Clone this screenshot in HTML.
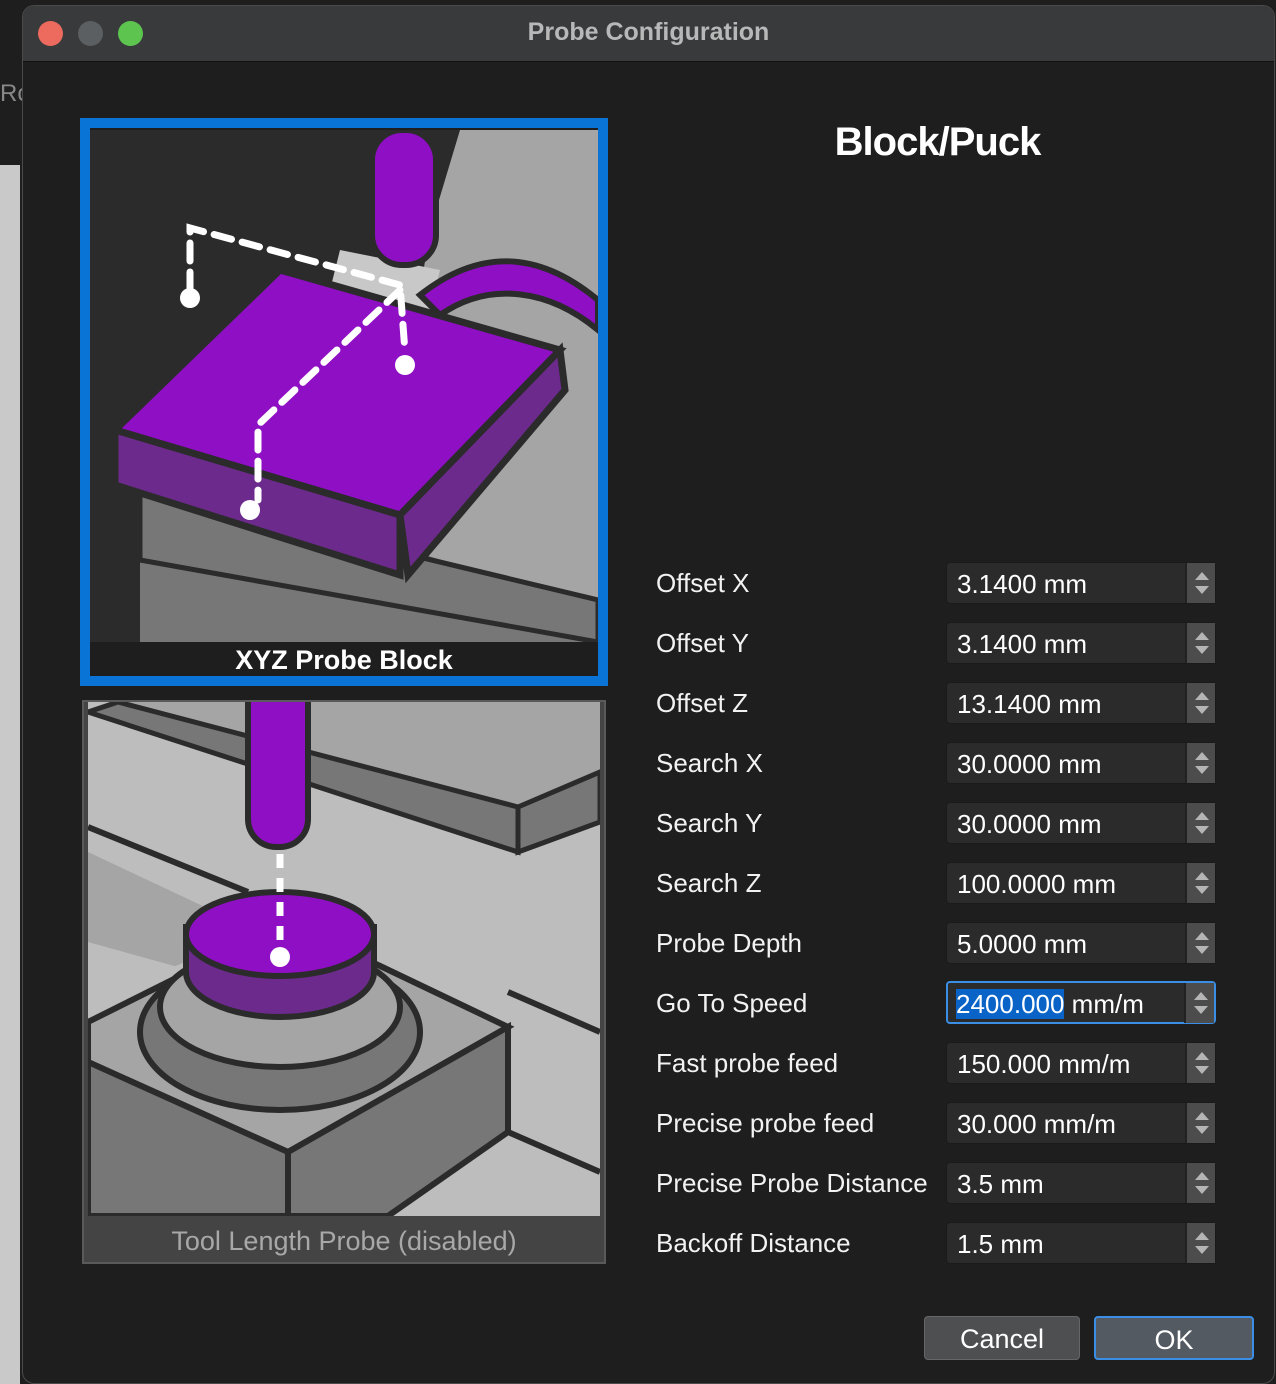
<!DOCTYPE html>
<html><head><meta charset="utf-8"><style>
*{margin:0;padding:0;box-sizing:border-box}
body{width:1276px;height:1384px;background:#1e1e1e;position:relative;overflow:hidden;font-family:"Liberation Sans",sans-serif}
.abs{position:absolute}
.win{left:22px;top:5px;width:1253px;height:1379px;background:#1e1e1e;border:1px solid #4a4a4a;border-radius:12px;overflow:hidden}
.tb{left:0;top:0;width:100%;height:56px;background:#383a3b;border-bottom:1px solid #111}
.dot{width:25px;height:25px;border-radius:50%;top:15px}
.lbl{left:656px;color:#f2f2f2;font-size:26px;top:0}
.sp{left:946px;width:270px;height:42px;background:#2b2b2b;border-radius:4px;border:1px solid #1a1a1a}
.sp span{position:absolute;left:10px;top:6px;color:#fff;font-size:26px}
.sp i{position:absolute;right:0;top:0;width:30px;height:40px;background:#4c4c4c;border-left:2px solid #222}
.sp i:before{content:"";position:absolute;left:8px;top:9px;border:7px solid transparent;border-bottom:8px solid #b5b5b5;border-top:0}
.sp i:after{content:"";position:absolute;left:8px;top:23px;border:7px solid transparent;border-top:8px solid #b5b5b5;border-bottom:0}
.btn{height:44px;top:1316px;background:#4d4f51;border-radius:4px;color:#fff;font-size:27px;text-align:center;line-height:44px}
</style></head><body>
<div class="abs" style="left:0;top:165px;width:20px;height:1219px;background:#c9c9c9"></div>
<div class="abs" style="left:0;top:80px;color:#888;font-size:24px">Rc</div>
<div class="win abs">
 <div class="tb abs">
  <div class="dot abs" style="left:15px;background:#ec6a5e"></div>
  <div class="dot abs" style="left:55px;background:#5c5f62"></div>
  <div class="dot abs" style="left:95px;background:#5ec450"></div>
  <div class="abs" style="left:0;width:100%;top:12px;text-align:center;color:#b8b8b8;font-size:25px;font-weight:bold">Probe Configuration</div>
 </div>
</div>
<div class="abs" style="left:80px;top:118px;width:528px;height:568px;border:10px solid #0a74d6;background:#1e1e1e"></div>
<svg class="abs" style="left:90px;top:130px" width="508" height="512" viewBox="0 0 508 512">
 <rect width="508" height="512" fill="#2b2b2b"/>
 <polygon points="370,0 508,0 508,512 200,512 230,460 300,350 340,100" fill="#a5a5a5"/>
 <polygon points="50,360 320,420 508,480 508,512 50,512" fill="#777"/>
 <polygon points="50,360 50,430 508,512 508,470" fill="#777" stroke="#2b2b2b" stroke-width="5"/>
 <polygon points="250,120 350,140 340,180 240,160" fill="#c8c8c8"/>
 <path d="M330,165 C400,110 460,130 508,170 L508,200 C460,160 400,150 350,185 Z" fill="#8f0fc4" stroke="#2b2b2b" stroke-width="6"/>
 <rect x="282" y="0" width="64" height="135" rx="30" fill="#8f0fc4" stroke="#2b2b2b" stroke-width="6"/>
 <polygon points="25,300 190,140 470,220 310,385" fill="#8f0fc4" stroke="#2b2b2b" stroke-width="7"/>
 <polygon points="25,300 310,385 310,445 25,355" fill="#6c2a8c" stroke="#2b2b2b" stroke-width="7"/>
 <polygon points="310,385 470,220 475,260 318,445" fill="#6c2a8c" stroke="#2b2b2b" stroke-width="7"/>
 <g stroke="#fff" stroke-width="7" fill="none" stroke-dasharray="18,11" stroke-linecap="round">
  <path d="M100,160 V98 L310,155 L315,222"/>
  <path d="M310,160 L168,295 V370"/>
 </g>
 <g fill="#fff"><circle cx="100" cy="168" r="10"/><circle cx="315" cy="235" r="10"/><circle cx="160" cy="380" r="10"/></g>
</svg>
<div class="abs" style="left:90px;top:642px;width:508px;height:34px;background:#1e1e1e;color:#fff;font-weight:bold;font-size:27px;text-align:center;line-height:36px">XYZ Probe Block</div>
<div class="abs" style="left:82px;top:700px;width:524px;height:564px;border:2px solid #5a5a5a;background:#444"></div>
<svg class="abs" style="left:88px;top:702px" width="512" height="514" viewBox="0 0 512 514">
 <rect width="512" height="514" fill="#bdbdbd"/>
 <polygon points="30,0 512,0 512,70 430,110" fill="#a5a5a5"/>
 <polygon points="30,0 430,105 430,150 0,10" fill="#777" stroke="#2b2b2b" stroke-width="5"/>
 <polygon points="430,105 512,70 512,120 430,150" fill="#777" stroke="#2b2b2b" stroke-width="5"/>
 <polygon points="0,150 170,230 0,300" fill="#a5a5a5"/>
 <polygon points="0,240 90,265 0,300" fill="#bdbdbd"/>
 <polygon points="0,320 200,220 420,325 200,450 0,360" fill="#a5a5a5" stroke="#2b2b2b" stroke-width="6"/>
 <polygon points="0,360 200,450 200,514 0,514" fill="#777" stroke="#2b2b2b" stroke-width="6"/>
 <polygon points="200,450 420,325 420,430 300,514 200,514" fill="#777" stroke="#2b2b2b" stroke-width="6"/>
 <path d="M0,125 L160,190" stroke="#2b2b2b" stroke-width="6"/>
 <path d="M420,290 L512,330 M420,430 L512,470" stroke="#2b2b2b" stroke-width="6"/>
 <ellipse cx="192" cy="330" rx="140" ry="78" fill="#777" stroke="#2b2b2b" stroke-width="6"/>
 <ellipse cx="192" cy="305" rx="120" ry="60" fill="#a5a5a5" stroke="#2b2b2b" stroke-width="6"/>
 <path d="M98,225 V270 A94,45 0 0 0 286,270 V225 Z" fill="#6c2a8c" stroke="#2b2b2b" stroke-width="6"/>
 <ellipse cx="192" cy="232" rx="94" ry="42" fill="#8f0fc4" stroke="#2b2b2b" stroke-width="6"/>
 <rect x="160" y="-30" width="60" height="175" rx="28" fill="#8f0fc4" stroke="#2b2b2b" stroke-width="6"/>
 <path d="M192,152 V240" stroke="#fff" stroke-width="7" stroke-dasharray="14,10"/>
 <circle cx="192" cy="255" r="10" fill="#fff"/>
</svg>
<div class="abs" style="left:84px;top:1216px;width:520px;height:46px;background:#444;color:#a8a8a8;font-size:27px;text-align:center;line-height:50px">Tool Length Probe (disabled)</div>
<div class="abs" style="left:640px;top:120px;width:595px;text-align:center;color:#fff;font-size:40px;font-weight:bold;letter-spacing:-1px">Block/Puck</div>

<div class="lbl abs" style="top:568px">Offset X</div><div class="sp abs" style="top:562px"><span>3.1400 mm</span><i></i></div>
<div class="lbl abs" style="top:628px">Offset Y</div><div class="sp abs" style="top:622px"><span>3.1400 mm</span><i></i></div>
<div class="lbl abs" style="top:688px">Offset Z</div><div class="sp abs" style="top:682px"><span>13.1400 mm</span><i></i></div>
<div class="lbl abs" style="top:748px">Search X</div><div class="sp abs" style="top:742px"><span>30.0000 mm</span><i></i></div>
<div class="lbl abs" style="top:808px">Search Y</div><div class="sp abs" style="top:802px"><span>30.0000 mm</span><i></i></div>
<div class="lbl abs" style="top:868px">Search Z</div><div class="sp abs" style="top:862px"><span>100.0000 mm</span><i></i></div>
<div class="lbl abs" style="top:928px">Probe Depth</div><div class="sp abs" style="top:922px"><span>5.0000 mm</span><i></i></div>
<div class="lbl abs" style="top:988px">Go To Speed</div><div class="sp abs" style="top:981px;border:2px solid #3a8ee6;height:43px"><span style="left:8px"><b style="font-weight:normal;background:#0a64c8">2400.000</b> mm/m</span><i></i></div>
<div class="lbl abs" style="top:1048px">Fast probe feed</div><div class="sp abs" style="top:1042px"><span>150.000 mm/m</span><i></i></div>
<div class="lbl abs" style="top:1108px">Precise probe feed</div><div class="sp abs" style="top:1102px"><span>30.000 mm/m</span><i></i></div>
<div class="lbl abs" style="top:1168px">Precise Probe Distance</div><div class="sp abs" style="top:1162px"><span>3.5 mm</span><i></i></div>
<div class="lbl abs" style="top:1228px">Backoff Distance</div><div class="sp abs" style="top:1222px"><span>1.5 mm</span><i></i></div>

<div class="btn abs" style="left:924px;width:156px;border:1px solid #666">Cancel</div>
<div class="btn abs" style="left:1094px;width:160px;border:2px solid #3a8ee6;background:#545a62">OK</div>
</body></html>
